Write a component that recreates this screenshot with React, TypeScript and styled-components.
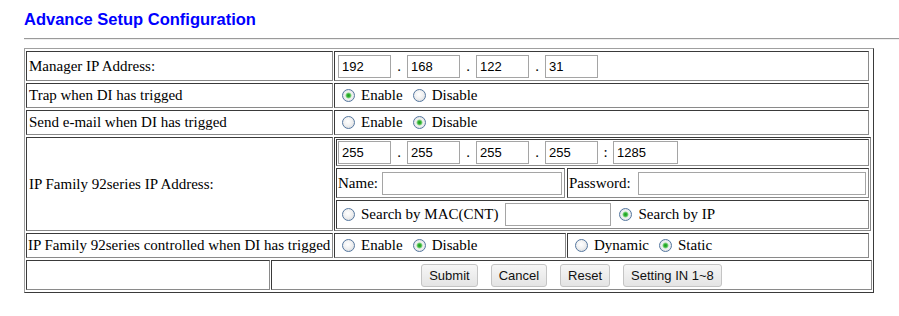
import React from "react";
import styled, { createGlobalStyle } from "styled-components";

const Global = createGlobalStyle`
  html, body { margin: 0; padding: 0; background: #ffffff; }
  body {
    font-family: "Liberation Serif", "Times New Roman", serif;
    font-size: 15px;
    color: #000000;
  }
`;

const Page = styled.div`
  padding: 9px 0 0 24px;
`;

const Title = styled.h1`
  margin: 0;
  font-family: "Liberation Sans", Arial, sans-serif;
  font-size: 16.5px;
  font-weight: bold;
  line-height: 20px;
  color: #0000ff;
`;

const Rule = styled.hr`
  margin: 9px 0 0 0;
  height: 0;
  border: 0;
  border-top: 1px solid #9a9a9a;
  border-bottom: 1px solid #eeeeee;
`;

const Frame = styled.div`
  box-sizing: border-box;
  width: 850px;
  margin-top: 8px;
  border: 1px solid;
  border-color: #a0a0a0 #3a3a3a #3a3a3a #a0a0a0;
  padding: 2px 1px;
  display: flex;
  flex-direction: column;
  gap: 2px;
`;

const MainGrid = styled.div`
  display: grid;
  grid-template-columns: 307px 535px;
  grid-template-rows: 30px 25px 25px 94px 25px;
  column-gap: 1px;
  row-gap: 2px;
`;

const Cell = styled.div<{ $pl?: number; $pr?: number; $w?: number }>`
  box-sizing: border-box;
  border: 1px solid;
  border-color: #3a3a3a #8a8a8a #8a8a8a #3a3a3a;
  padding: 0 ${(p) => p.$pr ?? 2}px 0 ${(p) => p.$pl ?? 2}px;
  display: flex;
  align-items: center;
  min-width: 0;
  white-space: nowrap;
  ${(p) => (p.$w ? `width: ${p.$w}px; flex: none;` : "flex: 1;")}
`;

const LabelCell = styled(Cell)`
  letter-spacing: 0;
`;

const NestCell = styled.div`
  box-sizing: border-box;
  width: 537px;
  border: 1px solid;
  border-color: #3a3a3a #8a8a8a #8a8a8a #3a3a3a;
  padding: 1px;
  display: grid;
  grid-template-rows: 27px 30px 29px;
  row-gap: 2px;
`;

const SubRow = styled.div`
  display: flex;
  gap: 2px;
  min-width: 0;
`;

const SplitRow = styled.div`
  display: flex;
  gap: 1px;
`;

const FootGrid = styled.div`
  display: grid;
  grid-template-columns: 244px 601px;
  height: 30px;
  column-gap: 1px;
`;

const ButtonBar = styled(Cell)`
  justify-content: center;
  gap: 13px;
  padding-left: 0;
  padding-right: 0;
`;

const TextInput = styled.input.attrs({ type: "text" })<{ $w?: number }>`
  box-sizing: border-box;
  ${(p) => (p.$w ? `width: ${p.$w}px; flex: none;` : "flex: 1; min-width: 0;")}
  height: 23px;
  margin: 0;
  padding: 1px 3px;
  border: 1px solid #a5a5a5;
  border-radius: 0;
  background: #ffffff;
  font-family: "Liberation Sans", Arial, sans-serif;
  font-size: 13px;
  color: #000000;
  outline: none;
`;

const Sep = styled.span<{ $w?: number }>`
  display: inline-block;
  width: ${(p) => p.$w ?? 16}px;
  flex: none;
  text-align: center;
  font-size: 15px;
`;

const FieldLabel = styled.span<{ $gap: number }>`
  flex: none;
  margin-right: ${(p) => p.$gap}px;
`;

const Option = styled.label`
  display: inline-flex;
  align-items: center;
  gap: 6px;
  margin: 0 5px;
  flex: none;
`;

const Radio = styled.input.attrs({ type: "radio" })`
  appearance: none;
  -webkit-appearance: none;
  box-sizing: border-box;
  width: 13px;
  height: 13px;
  margin: 0;
  border-radius: 50%;
  border: 1px solid #55779f;
  background: radial-gradient(circle at 45% 40%, #ffffff 0%, #f1f1f1 45%, #cfd3d8 100%);
  flex: none;
  &:checked {
    background: radial-gradient(
      circle at 50% 50%,
      #1f9a1f 0,
      #34b534 1.6px,
      #8fd88f 2.6px,
      #f2f2f2 3.4px,
      #d5d9de 100%
    );
  }
`;

const MacInput = styled(TextInput)`
  margin: 0 3px 0 2px;
`;

const Button = styled.button`
  box-sizing: border-box;
  height: 23px;
  padding: 0 7px;
  margin: 0;
  border: 1px solid #c4c4c4;
  border-radius: 3px;
  background: linear-gradient(#f6f6f6, #e4e4e4);
  font-family: "Liberation Sans", Arial, sans-serif;
  font-size: 13px;
  color: #111111;
`;

const IpFields: React.FC<{ values: string[] }> = ({ values }) => (
  <>
    {values.map((v, i) => (
      <React.Fragment key={i}>
        {i > 0 && <Sep>.</Sep>}
        <TextInput $w={53} defaultValue={v} />
      </React.Fragment>
    ))}
  </>
);

const RadioPair: React.FC<{ name: string; a: string; b: string; checked: "a" | "b" }> = ({
  name,
  a,
  b,
  checked,
}) => (
  <>
    <Option>
      <Radio name={name} defaultChecked={checked === "a"} />
      {a}
    </Option>
    <Option>
      <Radio name={name} defaultChecked={checked === "b"} />
      {b}
    </Option>
  </>
);

export default function App() {
  return (
    <>
      <Global />
      <Page>
        <Title>Advance Setup Configuration</Title>
        <Rule />
        <Frame>
          <MainGrid>
            <LabelCell>Manager IP Address:</LabelCell>
            <Cell $pl={3}>
              <IpFields values={["192", "168", "122", "31"]} />
            </Cell>

            <LabelCell>Trap when DI has trigged</LabelCell>
            <Cell>
              <RadioPair name="trap" a="Enable" b="Disable" checked="a" />
            </Cell>

            <LabelCell>Send e-mail when DI has trigged</LabelCell>
            <Cell>
              <RadioPair name="mail" a="Enable" b="Disable" checked="b" />
            </Cell>

            <LabelCell>IP Family 92series IP Address:</LabelCell>
            <NestCell>
              <SubRow>
                <Cell $pl={1}>
                  <IpFields values={["255", "255", "255", "255"]} />
                  <Sep $w={15}>:</Sep>
                  <TextInput $w={65} defaultValue="1285" />
                </Cell>
              </SubRow>
              <SubRow>
                <Cell $w={229} $pl={1}>
                  <FieldLabel $gap={4}>Name:</FieldLabel>
                  <TextInput />
                </Cell>
                <Cell $pl={1}>
                  <FieldLabel $gap={7}>Password:</FieldLabel>
                  <TextInput />
                </Cell>
              </SubRow>
              <SubRow>
                <Cell $pl={0}>
                  <Option>
                    <Radio name="search" />
                    Search by MAC(CNT)
                  </Option>
                  <MacInput $w={106} />
                  <Option>
                    <Radio name="search" defaultChecked />
                    Search by IP
                  </Option>
                </Cell>
              </SubRow>
            </NestCell>

            <LabelCell $pl={1} $pr={0}>
              IP Family 92series controlled when DI has trigged
            </LabelCell>
            <SplitRow>
              <Cell $w={232}>
                <RadioPair name="ctrl" a="Enable" b="Disable" checked="b" />
              </Cell>
              <Cell>
                <RadioPair name="mode" a="Dynamic" b="Static" checked="b" />
              </Cell>
            </SplitRow>
          </MainGrid>

          <FootGrid>
            <Cell />
            <ButtonBar>
              <Button type="button">Submit</Button>
              <Button type="button">Cancel</Button>
              <Button type="button">Reset</Button>
              <Button type="button">Setting IN 1~8</Button>
            </ButtonBar>
          </FootGrid>
        </Frame>
      </Page>
    </>
  );
}
